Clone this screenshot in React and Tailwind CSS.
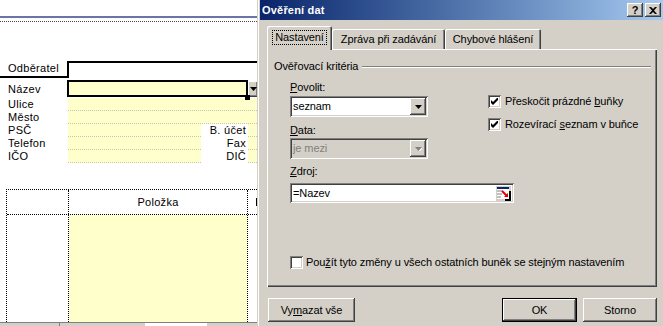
const raised =
  "shadow-[inset_-1px_-1px_#404040,inset_1px_1px_#ffffff,inset_-2px_-2px_#808080,inset_2px_2px_#d4d0c8]";
const sunken =
  "shadow-[inset_1px_1px_#808080,inset_-1px_-1px_#ffffff,inset_2px_2px_#404040,inset_-2px_-2px_#d4d0c8]";

function Arrow({ disabled }) {
  return (
    <svg width="7" height="4" viewBox="0 0 7 4">
      {disabled && <path d="M1 1h7L4.5 4.5z" fill="#ffffff" />}
      <path d="M0 0h7L3.5 4z" fill={disabled ? "#808080" : "#000000"} />
    </svg>
  );
}

function Check({ checked }) {
  return (
    <div className={`w-[13px] h-[13px] bg-white shrink-0 flex items-center justify-center ${sunken}`}>
      {checked && (
        <svg width="7" height="7" viewBox="0 0 7 7">
          <path d="M0 2v3l2 2 5-5V-1L2 4z" fill="#000000" />
        </svg>
      )}
    </div>
  );
}

function Select({ value, disabled }) {
  return (
    <div
      className={`w-[138px] h-[21px] flex items-center p-[2px] ${sunken} ${
        disabled ? "bg-[#d4d0c8]" : "bg-white"
      }`}
    >
      <span className={`flex-1 pl-[1px] ${disabled ? "text-[#808080]" : "text-black"}`}>{value}</span>
      <div className={`w-[16px] h-[17px] bg-[#d4d0c8] flex items-center justify-center ${raised}`}>
        <Arrow disabled={disabled} />
      </div>
    </div>
  );
}

function Sheet() {
  return (
    <div className="w-[257px] h-full shrink-0 overflow-hidden bg-white text-[11px] tracking-[0.3px] text-black flex flex-col">
      <div className="h-[16px] shrink-0" />
      <div className="h-[2px] shrink-0 bg-[#6b74a6]" />
      <div className="h-[3px] shrink-0" />
      <div className="shrink-0 border-t border-dotted border-[#444]" />
      <div className="h-[39px] shrink-0" />

      {/* Odběratel */}
      <div className="flex h-[17px] shrink-0">
        <div className="w-[67px] shrink-0 border-b-2 border-black pl-[8px] leading-[14px]">Odběratel</div>
        <div className="flex-1 border-l-2 border-t-2 border-black" />
      </div>

      {/* Název */}
      <div className="flex h-[18px] mt-[2px] shrink-0">
        <div className="w-[67px] shrink-0 pl-[8px] leading-[18px]">Název</div>
        <div className="relative w-[181px] shrink-0 h-[17px] border-2 border-black bg-[#ffffcc]">
          <div className="absolute right-[-4px] bottom-[-5px] w-[5px] h-[5px] bg-black" />
        </div>
        <div className={`w-[10px] shrink-0 h-[16px] mt-[1px] bg-[#d4d0c8] flex items-center justify-center ${raised}`}>
          <Arrow />
        </div>
      </div>

      {["Ulice", "Město"].map((l) => (
        <div key={l} className="flex h-[13px] shrink-0">
          <div className="w-[68px] shrink-0 pl-[8px] leading-[13px]">{l}</div>
          <div className="flex-1 bg-[#ffffcc] border-b border-dotted border-[#c8c8b0]" />
        </div>
      ))}

      {[
        ["PSČ", "B. účet"],
        ["Telefon", "Fax"],
        ["IČO", "DIČ"],
      ].map(([a, b]) => (
        <div key={a} className="flex h-[13px] shrink-0">
          <div className="w-[68px] shrink-0 pl-[8px] leading-[13px]">{a}</div>
          <div className="w-[133px] shrink-0 bg-[#ffffcc] border-b border-dotted border-[#c8c8b0]" />
          <div className="w-[46px] shrink-0 text-right pr-[1px] leading-[13px]">{b}</div>
          <div className="flex-1 ml-[1px] bg-[#ffffcc] border-b border-dotted border-[#c8c8b0]" />
        </div>
      ))}

      <div className="h-[26px] shrink-0" />

      {/* table */}
      <div className="ml-[6px] border-t border-l border-dotted border-black shrink-0">
        <div className="flex h-[25px] border-b border-dotted border-black">
          <div className="w-[62px] shrink-0 border-r border-dotted border-black" />
          <div className="w-[179px] shrink-0 border-r border-dotted border-black flex items-center justify-center">
            Položka
          </div>
          {/* left stroke of the next header, cut by the dialog */}
          <div className="flex-1 min-w-0 pl-[8px] flex items-center">
            <div className="w-[1px] h-[8px] bg-black" />
          </div>
        </div>
        <div className="flex h-[107px]">
          <div className="w-[62px] shrink-0 border-r border-dotted border-black" />
          <div className="w-[179px] shrink-0 bg-[#ffffcc] border-r border-dotted border-black" />
          <div className="flex-1" />
        </div>
      </div>
      <div className="h-[4px] shrink-0 bg-[#d4d0c8] border-t border-[#808080] flex">
        <div className="w-[60px] border-r border-[#808080]" />
        <div className="w-[85px]" />
        <div className="w-[62px] bg-white" />
      </div>
    </div>
  );
}

function Dialog() {
  return (
    <div className="flex-1 h-full bg-[#d4d0c8] flex flex-col text-[11px] tracking-[-0.1px] text-black shadow-[inset_1px_0_#d4d0c8,inset_2px_0_#ffffff]">
      {/* title bar */}
      <div className="h-[20px] ml-[3px] shrink-0 flex items-center bg-linear-to-r from-[#0a246a] to-[#a6caf0] pl-[2px] pr-[2px]">
        <span className="font-bold text-white text-[11px] tracking-[0.2px]">Ověření dat</span>
        <div className="ml-auto flex gap-[2px]">
          <div className={`w-[16px] h-[14px] bg-[#d4d0c8] flex items-center justify-center font-bold text-[11px] leading-none ${raised}`}>
            ?
          </div>
          <div className={`w-[16px] h-[14px] bg-[#d4d0c8] flex items-center justify-center ${raised}`}>
            <svg width="8" height="7" viewBox="0 0 8 7">
              <path d="M0 0h2l2 2 2-2h2L5 3.5 8 7H6L4 5 2 7H0l3-3.5z" fill="#000000" />
            </svg>
          </div>
        </div>
      </div>

      {/* tabs */}
      <div className="flex items-end h-[23px] mt-[6px] ml-[10px] shrink-0">
        <div className="relative z-10 w-[65px] h-[24px] -mb-[1px] bg-[#d4d0c8] rounded-t-[2px] flex items-start justify-center pt-[4px] shadow-[inset_1px_1px_#ffffff,inset_-1px_0_#404040,inset_-2px_0_#808080]">
          <span className="border border-dotted border-black px-[2px] leading-[13px]">Nastavení</span>
        </div>
        <div className="w-[113px] h-[20px] bg-[#d4d0c8] rounded-t-[2px] flex items-center justify-center shadow-[inset_1px_1px_#ffffff,inset_-1px_0_#404040,inset_-2px_0_#808080]">
          Zpráva při zadávání
        </div>
        <div className="w-[96px] h-[20px] bg-[#d4d0c8] rounded-t-[2px] flex items-center justify-center shadow-[inset_1px_1px_#ffffff,inset_-1px_0_#404040,inset_-2px_0_#808080]">
          Chybové hlášení
        </div>
      </div>

      {/* panel */}
      <div className="w-[390px] h-[238px] ml-[10px] shrink-0 flex flex-col pt-[11px] pl-[7px] pr-[6px] shadow-[inset_1px_1px_#ffffff,inset_-1px_-1px_#404040,inset_-2px_-2px_#808080]">
        <div className="flex items-center h-[13px]">
          <span>Ověřovací kritéria</span>
          <div className="flex-1 ml-[4px] h-[2px] border-t border-b border-t-[#808080] border-b-white" />
        </div>

        <div className="ml-[16px] flex flex-col">
          <div className="flex mt-[8px]">
            <div className="w-[138px] flex flex-col">
              <div className="h-[13px] leading-[13px]">
                <u>P</u>ovolit:
              </div>
              <div className="mt-[2px]">
                <Select value="seznam" />
              </div>
              <div className="h-[13px] leading-[13px] mt-[7px]">
                <u>D</u>ata:
              </div>
              <div className="mt-[1px]">
                <Select value="je mezi" disabled />
              </div>
            </div>
            <div className="ml-[60px] pt-[14px] flex flex-col gap-[10px]">
              <div className="flex items-center gap-[4px] h-[13px]">
                <Check checked />
                <span>
                  Přeskočit prázdné <u>b</u>uňky
                </span>
              </div>
              <div className="flex items-center gap-[4px] h-[13px]">
                <Check checked />
                <span>
                  Rozevírací <u>s</u>eznam v buňce
                </span>
              </div>
            </div>
          </div>

          <div className="h-[13px] leading-[13px] mt-[6px]">
            <u>Z</u>droj:
          </div>
          <div className={`mt-[5px] w-[224px] h-[20px] bg-white flex items-center p-[2px] ${sunken}`}>
            <span className="flex-1 pl-[1px]">=Nazev</span>
            <svg width="15" height="15" viewBox="0 0 15 15" className="mr-[1px]">
              <rect x="0" y="0" width="15" height="15" fill="#d4d0c8" />
              <rect x="1" y="1" width="12" height="12" fill="#ffffff" />
              <path d="M1 1h12v2H1z" fill="#0a246a" />
              <path d="M1 5h6M1 8h5M1 11h4" stroke="#808080" strokeWidth="1" />
              <path d="M6 5l5 5" stroke="#e00000" strokeWidth="2" />
              <path d="M8 11h4V7z" fill="#e00000" />
              <path d="M9 13h6v2H9zM13 5h2v10h-2z" fill="#000000" />
            </svg>
          </div>

          <div className="flex items-center gap-[3px] mt-[53px] h-[13px]">
            <Check />
            <span>
              Pou<u>ž</u>ít tyto změny u všech ostatních buněk se stejným nastavením
            </span>
          </div>
        </div>
      </div>

      {/* buttons */}
      <div className="flex mt-[11px] ml-[11px] mr-[6px] h-[24px] shrink-0">
        <div className={`w-[87px] h-full flex items-center justify-center ${raised}`}>
          Vy<u>m</u>azat vše
        </div>
        <div className="ml-auto w-[75px] h-full border border-black">
          <div className={`w-full h-full flex items-center justify-center ${raised}`}>OK</div>
        </div>
        <div className={`ml-[6px] w-[74px] h-full flex items-center justify-center ${raised}`}>Storno</div>
      </div>
    </div>
  );
}

export default function App() {
  return (
    <div className="w-[663px] h-[326px] overflow-hidden flex font-['Liberation_Sans',Arial,sans-serif]">
      <Sheet />
      <Dialog />
    </div>
  );
}
